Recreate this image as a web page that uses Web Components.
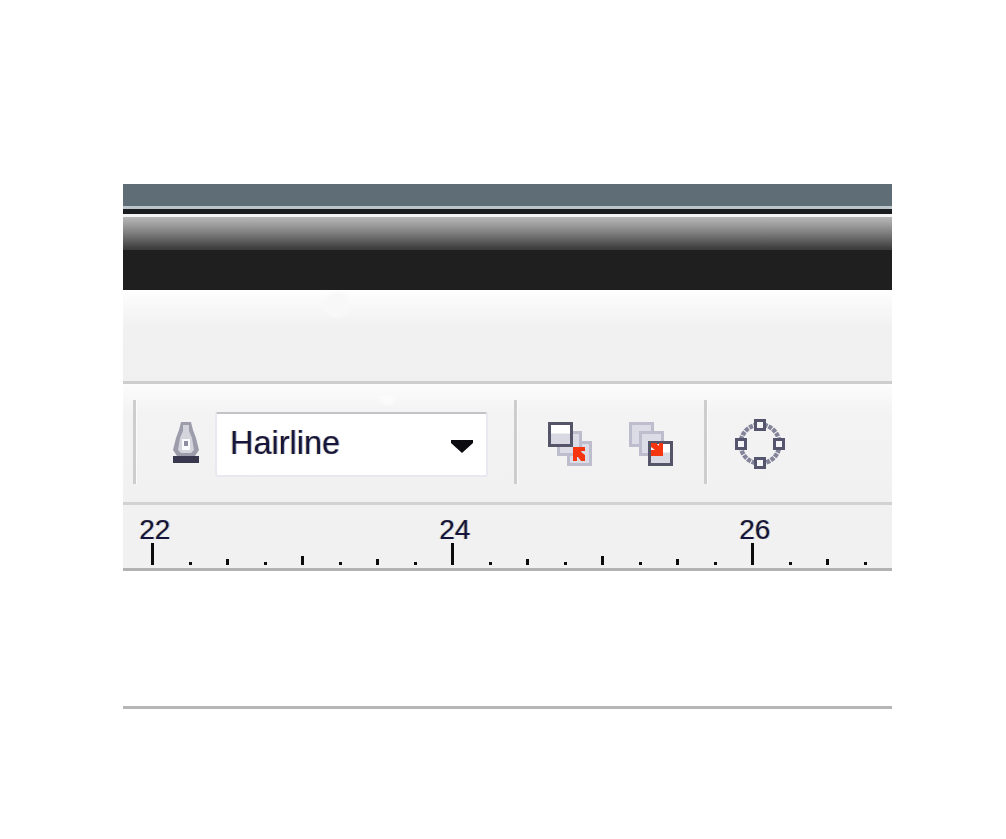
<!DOCTYPE html>
<html>
<head>
<meta charset="utf-8">
<title>Toolbar</title>
<style>
  html, body { margin: 0; background: #fff; }
  body { padding: 184px 0 0 123px; font-family: "Liberation Sans", sans-serif; }
</style>
</head>
<body>
<editor-frame>
  <title-bands></title-bands>
  <menu-band></menu-band>
  <prop-bar>
    <bar-sep></bar-sep>
    <pen-icon></pen-icon>
    <outline-combo>Hairline</outline-combo>
    <bar-sep></bar-sep>
    <order-icon kind="back"></order-icon>
    <order-icon kind="front"></order-icon>
    <bar-sep></bar-sep>
    <nodes-icon></nodes-icon>
  </prop-bar>
  <h-ruler start="22" count="21"></h-ruler>
  <blank-canvas></blank-canvas>
</editor-frame>

<script>
function define(name, html) {
  customElements.define(name, class extends HTMLElement {
    constructor() {
      super();
      this.attachShadow({ mode: 'open' }).innerHTML = html;
    }
  });
}

define('editor-frame', `
  <style>:host { display: flex; flex-direction: column; width: 769px; position: relative; }</style>
  <slot></slot>`);

// The dark stripes at the top of the shot
define('title-bands', `
  <style>
    :host { display: block; }
    div { display: block; }
    #slate { height: 22px; background: #5f6d77; }
    #light { height: 3px; background: #bcc5ca; }
    #dark { height: 5px; background: #1b1c1e; }
    #white { height: 3px; background: #f4f4f4; }
    #fade { height: 33px; background: linear-gradient(#b6b6b6, #a8a8a8 15%, #7c7c7c 50%, #454545 90%, #3a3a3a); }
    #black { height: 40px; background: #1f1f1f; }
  </style>
  <div id="slate"></div><div id="light"></div><div id="dark"></div>
  <div id="white"></div><div id="fade"></div><div id="black"></div>`);

define('menu-band', `
  <style>
    :host {
      display: block; height: 91px; position: relative;
      background: linear-gradient(#fefefe, #f9f9f9 15%, #f1f1f1 40%, #f0f0f0);
      border-bottom: 3px solid #cdcdcd;
    }
    i {
      position: absolute; left: 201px; top: 2px; width: 26px; height: 26px; border-radius: 50%;
      background: #f8f8f8; filter: blur(1px);
    }
  </style>
  <i></i>`);

define('prop-bar', `
  <style>
    :host {
      display: flex; align-items: center; height: 121px; padding-left: 10px; box-sizing: border-box;
      background: linear-gradient(#fcfcfc, #f3f3f3 25%, #f1f1f1);
      border-bottom: 3px solid #d2d2d2; position: relative;
    }
    ::slotted(bar-sep:nth-of-type(1)) { margin-right: 36px; }
    ::slotted(pen-icon) { margin-right: 16px; }
    ::slotted(outline-combo) { margin-right: 26px; }
    ::slotted(bar-sep:nth-of-type(2)) { margin-right: 30px; }
    ::slotted(order-icon[kind=back]) { margin-right: 37px; }
    ::slotted(order-icon[kind=front]) { margin-right: 31px; }
    ::slotted(bar-sep:nth-of-type(3)) { margin-right: 27px; }
    i {
      position: absolute; left: 257px; top: 12px; width: 16px; height: 9px; border-radius: 0 0 8px 8px;
      background: #fbfbfb; filter: blur(1px);
    }
  </style>
  <i></i>
  <slot></slot>`);

define('bar-sep', `
  <style>
    :host { display: block; width: 3px; height: 84px; background: #cdcdcd; border-right: 1px solid #fbfbfb; margin-bottom: 2px; }
  </style>`);

define('pen-icon', `
  <style>:host { display: block; width: 26px; height: 42px; margin-bottom: 2px; } svg { display: block; filter: blur(.5px); }</style>
  <svg width="26" height="42" viewBox="0 0 26 42">
    <path d="M8 1h10l2 8 3 8 3 12-4 6H4l-4-6 3-12 3-8z" fill="#9c9cab"/>
    <path d="M10 4h6v6l3 7 2 12-3 3H8l-3-3 2-12 3-7z" fill="#d4d4dd"/>
    <path d="M9 18h8v11H9z" fill="#fbfbfd"/>
    <path d="M11 20h4v5h-4z" fill="#8e8ea0"/>
    <path d="M0 35h26v7H0z" fill="#38384e"/>
  </svg>`);

define('outline-combo', `
  <style>
    :host {
      display: flex; align-items: center; justify-content: space-between; box-sizing: border-box;
      width: 273px; height: 65px; padding: 0 13px 0 13px; background: #fff;
      border: 2px solid #e8e8f0; border-top-color: #c4c4c8; border-radius: 3px;
      font: 32.5px "Liberation Sans", sans-serif; color: #16163c;
      text-shadow: -1px 0 0 #f4d3a4, 1px 0 0 #a9c4ea;
      margin-top: 3px;
    }
    span { display: block; margin-top: -2px; filter: blur(.35px); }
    svg { display: block; margin-top: 3px; }
  </style>
  <span><slot></slot></span>
  <svg width="22" height="13" viewBox="0 0 22 13"><path d="M0 0h22v3L11 13 0 3z" fill="#0c0c10"/></svg>`);

customElements.define('order-icon', class extends HTMLElement {
  constructor() {
    super();
    const back = this.getAttribute('kind') == 'back';
    const dark = 'fill="url(#w)" stroke="#55556a"';
    const pale = 'fill="#dcdce6" stroke="#bdbdcd"';
    const arrow = back
      ? '<path d="M25 25h12v4h-4v1l4 3v6h-4l-3-4h-1v4h-4z" fill="#f5350f"/>'
      : '<path d="M22 21h5l3 3v-3h4v13H22v-6h4l-4-3z" fill="#f5350f"/>';
    const shapes = back
      ? `<rect x="20.5" y="20.5" width="22" height="22" ${pale}/>
         <rect x="10.5" y="10.5" width="22" height="22" ${pale}/>
         <rect x="1.5" y="1.5" width="22" height="22" ${dark}/>`
      : `<rect x="1.5" y="1.5" width="22" height="22" ${pale}/>
         <rect x="11.5" y="10.5" width="22" height="22" ${pale}/>
         <rect x="20.5" y="20.5" width="22" height="22" ${dark}/>`;
    this.attachShadow({ mode: 'open' }).innerHTML = `
      <style>:host { display: block; width: 44px; height: 44px; margin-top: 2px; } svg { display: block; filter: blur(.4px); }</style>
      <svg width="44" height="44" viewBox="0 0 44 44">
        <defs><linearGradient id="w" x1="0" y1="0" x2="0" y2="1">
          <stop offset=".45" stop-color="#fff"/><stop offset=".46" stop-color="#d8d8e2"/>
        </linearGradient></defs>
        <g stroke-width="3">${shapes}</g>${arrow}
      </svg>`;
  }
});

define('nodes-icon', `
  <style>:host { display: block; width: 50px; height: 50px; margin-top: 1px; } svg { display: block; filter: blur(.4px); }</style>
  <svg width="50" height="50" viewBox="0 0 50 50">
    <circle cx="25" cy="25" r="19.5" fill="none" stroke="#83839a" stroke-width="4.5" stroke-dasharray="4 1"/>
    <g fill="#f4f4f6" stroke="#55556e" stroke-width="3">
      <rect x="20.5" y="1.5" width="9" height="9"/>
      <rect x="1.5" y="20.5" width="9" height="9"/>
      <rect x="39.5" y="20.5" width="9" height="9"/>
      <rect x="20.5" y="39.5" width="9" height="9"/>
    </g>
  </svg>`);

// Ruler: one cell per 37.5px step, every 8th holds a number
customElements.define('h-ruler', class extends HTMLElement {
  constructor() {
    super();
    const start = +this.getAttribute('start');
    const count = +this.getAttribute('count');
    let cells = '';
    for (let i = 0; i < count; i++) {
      const major = i % 8 == 0, mid = i % 4 == 0, odd = i % 2 == 1;
      const cls = major ? 'major' : mid ? 'mid' : odd ? 'dot' : 'short';
      const label = major ? `<span>${start + i / 4}</span>` : '';
      cells += `<div class="cell ${cls}">${label}<b></b></div>`;
    }
    this.attachShadow({ mode: 'open' }).innerHTML = `
      <style>
        :host {
          display: flex; height: 66px; box-sizing: border-box; padding: 0 0 3px 11px; overflow: hidden;
          background: #f1f1f1; border-bottom: 3px solid #b2b2b2;
          font: 28px "Liberation Sans", sans-serif; color: #14143a;
        }
        .cell { flex: 0 0 37.5px; display: flex; flex-direction: column; align-items: center; justify-content: flex-end; }
        span { display: block; line-height: 25px; margin: 0 0 1px 4px; text-shadow: -1px 0 0 #f2c78e, 1px 0 0 #8fbbe8; filter: blur(.35px); }
        b { display: block; width: 3px; background: #0c0c0c; }
        .major b { height: 22px; }
        .mid b { height: 9px; }
        .short b { height: 6px; }
        .dot b { height: 3px; width: 3px; }
      </style>
      ${cells}`;
  }
});

define('blank-canvas', `
  <style>:host { display: block; height: 135px; background: #fff; border-bottom: 3px solid #b6b6b6; }</style>`);
</script>
</body>
</html>
